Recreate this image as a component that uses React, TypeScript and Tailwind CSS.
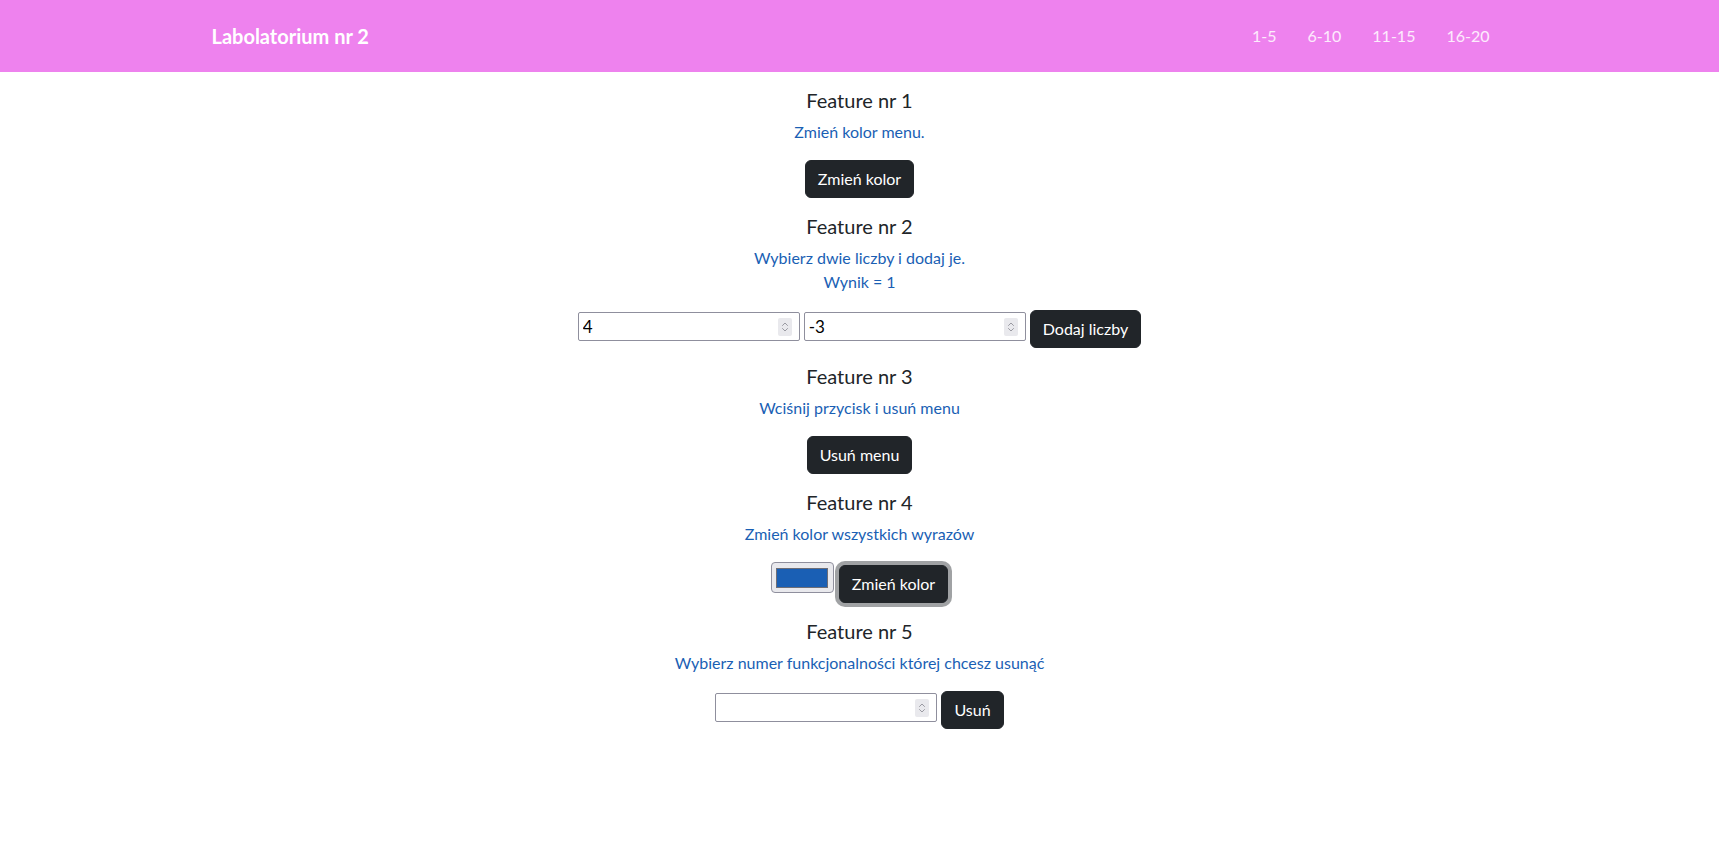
import React from "react";

function Spinner() {
  return (
    <div className="w-[14px] h-[18px] bg-[#e9e9ed] rounded-[2px] flex items-center justify-center shrink-0">
      <svg width="10" height="14" viewBox="0 0 10 14" fill="none">
        <path d="M2.5 5.5 L5 3 L7.5 5.5" stroke="#9a9aa2" strokeWidth="1" strokeLinecap="round" strokeLinejoin="round" />
        <path d="M2.5 8.5 L5 11 L7.5 8.5" stroke="#9a9aa2" strokeWidth="1" strokeLinecap="round" strokeLinejoin="round" />
      </svg>
    </div>
  );
}

function NumberBox({ value }: { value: string }) {
  return (
    <div className="mt-[2px] w-[222px] h-[29px] border border-[#8f8f9d] rounded-[2px] bg-white flex items-center pr-[7px]">
      <input
        readOnly
        value={value}
        className="flex-1 min-w-0 h-full pl-[4px] bg-transparent outline-none text-[17px] text-black font-['Lato','Liberation_Sans',sans-serif]"
      />
      <Spinner />
    </div>
  );
}

function DarkButton({ children, ring = false, className = "" }: { children: React.ReactNode; ring?: boolean; className?: string }) {
  return (
    <button
      className={
        "h-[38px] px-3 rounded-md bg-[#212529] border border-[#212529] text-white text-[16px] leading-6 " +
        (ring ? "shadow-[0_0_0_4px_rgba(66,70,73,0.5)] " : "") +
        className
      }
    >
      {children}
    </button>
  );
}

function Section({ title, children, row }: { title: string; children: React.ReactNode; row: React.ReactNode }) {
  return (
    <section className="pt-4 flex flex-col items-center text-center">
      <h5 className="text-[20px] leading-6 font-normal text-[#212529] mb-2">{title}</h5>
      <p className="text-[16px] leading-6 text-[#1a5fb4] mb-4">{children}</p>
      {row}
    </section>
  );
}

export default function App() {
  return (
    <div className="min-h-screen bg-white font-['Lato','Liberation_Sans',sans-serif]">
      <nav className="bg-[#ee82ee] h-[72px]">
        <div className="mx-auto max-w-[1320px] h-full px-3 flex items-center justify-between">
          <span className="text-white font-bold text-[20px] leading-[30px]">Labolatorium nr 2</span>
          <ul className="flex gap-[31px] pr-[18px] text-[16px] leading-6 text-white/85">
            <li>1-5</li>
            <li>6-10</li>
            <li>11-15</li>
            <li>16-20</li>
          </ul>
        </div>
      </nav>
      <main className="flex flex-col items-center">
        <Section title="Feature nr 1" row={<DarkButton>Zmień kolor</DarkButton>}>
          Zmień kolor menu.
        </Section>
        <Section
          title="Feature nr 2"
          row={
            <div className="flex items-start gap-1">
              <NumberBox value="4" />
              <NumberBox value="-3" />
              <DarkButton>Dodaj liczby</DarkButton>
            </div>
          }
        >
          Wybierz dwie liczby i dodaj je.
          <br />
          Wynik = 1
        </Section>
        <Section title="Feature nr 3" row={<DarkButton>Usuń menu</DarkButton>}>
          Wciśnij przycisk i usuń menu
        </Section>
        <Section
          title="Feature nr 4"
          row={
            <div className="flex items-start gap-[5px]">
              <div className="w-[63px] h-[31px] bg-[#e9e9ed] border border-[#8f8f9d] rounded-[4px] flex items-center justify-center">
                <div className="w-[52px] h-[20px] bg-[#1a5fb4] border border-[#6e6e76]" />
              </div>
              <DarkButton ring className="mt-[3px]">
                Zmień kolor
              </DarkButton>
            </div>
          }
        >
          Zmień kolor wszystkich wyrazów
        </Section>
        <Section
          title="Feature nr 5"
          row={
            <div className="flex items-start gap-1">
              <NumberBox value="" />
              <DarkButton>Usuń</DarkButton>
            </div>
          }
        >
          Wybierz numer funkcjonalności której chcesz usunąć
        </Section>
      </main>
    </div>
  );
}
